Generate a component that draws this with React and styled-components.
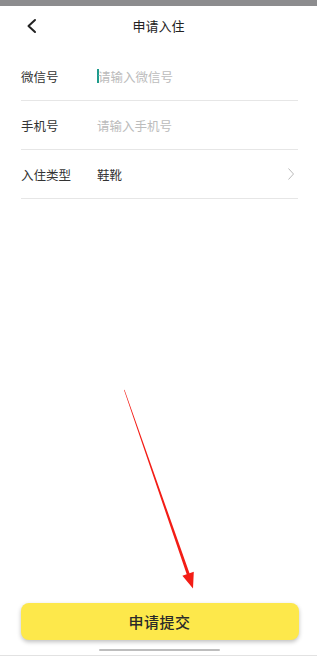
import React from 'react';
import styled, { createGlobalStyle } from 'styled-components';

const GlobalStyle = createGlobalStyle`
  html, body {
    margin: 0;
    padding: 0;
    background: #fff;
    font-family: "Noto Sans CJK SC", "Noto Sans", sans-serif;
  }
`

const Page = styled.div`
  position: relative;
  height: 100vh;
  display: flex;
  flex-direction: column;
  overflow: hidden;
`

const StatusBar = styled.div`
  height: 6px;
  background: #8c8c8e;
`

const Header = styled.div`
  position: relative;
  height: 38px;
  display: flex;
  align-items: center;
  justify-content: center;
`

const BackButton = styled.div`
  position: absolute;
  left: 25px;
  top: 12px;
  width: 14px;
  height: 16px;
  display: flex;
`

const Title = styled.div`
  font-size: 13px;
  color: #222;
`

const Form = styled.div`
  margin: 8px 19px 0 21px;
`

const Row = styled.div`
  height: 48px;
  display: flex;
  align-items: center;
  border-bottom: 1px solid #e6e6e6;
  font-size: 12.5px;
`

const Label = styled.div`
  width: 76px;
  color: #333;
`

const Value = styled.div`
  flex: 1;
  display: flex;
  align-items: center;
  color: ${p => (p.placeholder ? '#bcbcbc' : '#333')};
`

const Cursor = styled.span`
  width: 2px;
  height: 14px;
  background: #1f9b8c;
  margin-right: -1px;
`

const Chevron = styled.div`
  width: 10px;
  height: 14px;
  display: flex;
  margin-right: 2px;
`

const Spacer = styled.div`
  flex: 1;
`

const Footer = styled.div`
  display: flex;
  flex-direction: column;
  align-items: center;
  padding-left: 2px;
`

const SubmitButton = styled.button`
  width: 278px;
  height: 37px;
  border: none;
  border-radius: 8px;
  background: #fde84b;
  box-shadow: 0 2px 4px rgba(0, 0, 0, 0.25);
  font-family: inherit;
  font-size: 15px;
  font-weight: 500;
  color: #2a2a2a;
  letter-spacing: 0.5px;
`

const HomeBar = styled.div`
  margin-top: 9px;
  width: 121px;
  height: 2px;
  border-radius: 1px;
  background: #bdbdbd;
`

const BottomLine = styled.div`
  margin-top: 4px;
  align-self: stretch;
  margin-left: -2px;
  height: 1px;
  margin-bottom: 1px;
  background: #e2e2e2;
`

const Annotation = styled.svg`
  position: absolute;
  left: 0;
  top: 0;
  width: 317px;
  height: 657px;
  pointer-events: none;
`

const rows = [
  { label: '微信号', value: '请输入微信号', placeholder: true, cursor: true },
  { label: '手机号', value: '请输入手机号', placeholder: true },
  { label: '入住类型', value: '鞋靴', arrow: true },
]

const App = () => {
  return (
    <Page>
      <GlobalStyle />
      <StatusBar />
      <Header>
        <BackButton>
          <svg width="14" height="16" viewBox="0 0 14 16">
            <path d="M10 2 L3.5 8 L10 14" fill="none" stroke="#222" strokeWidth="2" strokeLinecap="round" strokeLinejoin="round" />
          </svg>
        </BackButton>
        <Title>申请入住</Title>
      </Header>
      <Form>
        {rows.map(r => (
          <Row key={r.label}>
            <Label>{r.label}</Label>
            <Value placeholder={r.placeholder ? 1 : 0}>
              {r.cursor && <Cursor />}
              {r.value}
            </Value>
            {r.arrow && (
              <Chevron>
                <svg width="10" height="14" viewBox="0 0 10 14">
                  <path d="M2.5 1.5 L7.5 7 L2.5 12.5" fill="none" stroke="#bbb" strokeWidth="1" />
                </svg>
              </Chevron>
            )}
          </Row>
        ))}
      </Form>
      <Spacer />
      <Footer>
        <SubmitButton>申请提交</SubmitButton>
        <HomeBar />
        <BottomLine />
      </Footer>
      <Annotation viewBox="0 0 317 657">
        <polygon
          points="124,390 124.5,389.8 189.5,573.3 193.8,571.8 193,588.5 182.4,575.8 186.7,574.3"
          fill="#f31d16"
        />
      </Annotation>
    </Page>
  );
}

export default App;
